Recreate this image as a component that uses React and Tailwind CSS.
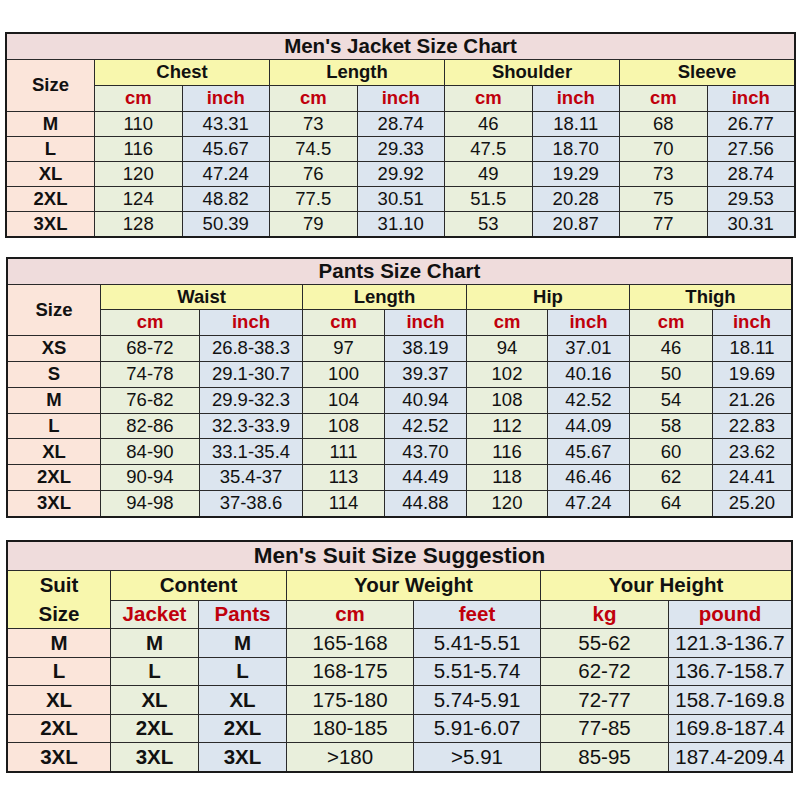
import React from 'react';

const FONT = "font-['Liberation_Sans',Arial,sans-serif]";

// cell backgrounds
const BG = {
  title: 'bg-[#efdcdc]',
  head: 'bg-[#f8f7ad]',
  size: 'bg-[#fbe5da]',
  cm: 'bg-[#e9efdc]',
  inch: 'bg-[#dce5ef]',
};

const Cell = ({ bg, className = '', children }) => (
  <div className={`${bg} flex items-center justify-center leading-none ${className}`}>{children}</div>
);

const Unit = ({ bg, children }) => (
  <Cell bg={bg} className="font-bold text-[#c0000c]">{children}</Cell>
);

const jacketRows = [
  ['M', '110', '43.31', '73', '28.74', '46', '18.11', '68', '26.77'],
  ['L', '116', '45.67', '74.5', '29.33', '47.5', '18.70', '70', '27.56'],
  ['XL', '120', '47.24', '76', '29.92', '49', '19.29', '73', '28.74'],
  ['2XL', '124', '48.82', '77.5', '30.51', '51.5', '20.28', '75', '29.53'],
  ['3XL', '128', '50.39', '79', '31.10', '53', '20.87', '77', '30.31'],
];

const pantsRows = [
  ['XS', '68-72', '26.8-38.3', '97', '38.19', '94', '37.01', '46', '18.11'],
  ['S', '74-78', '29.1-30.7', '100', '39.37', '102', '40.16', '50', '19.69'],
  ['M', '76-82', '29.9-32.3', '104', '40.94', '108', '42.52', '54', '21.26'],
  ['L', '82-86', '32.3-33.9', '108', '42.52', '112', '44.09', '58', '22.83'],
  ['XL', '84-90', '33.1-35.4', '111', '43.70', '116', '45.67', '60', '23.62'],
  ['2XL', '90-94', '35.4-37', '113', '44.49', '118', '46.46', '62', '24.41'],
  ['3XL', '94-98', '37-38.6', '114', '44.88', '120', '47.24', '64', '25.20'],
];

const suitRows = [
  ['M', 'M', 'M', '165-168', '5.41-5.51', '55-62', '121.3-136.7'],
  ['L', 'L', 'L', '168-175', '5.51-5.74', '62-72', '136.7-158.7'],
  ['XL', 'XL', 'XL', '175-180', '5.74-5.91', '72-77', '158.7-169.8'],
  ['2XL', '2XL', '2XL', '180-185', '5.91-6.07', '77-85', '169.8-187.4'],
  ['3XL', '3XL', '3XL', '>180', '>5.91', '85-95', '187.4-209.4'],
];

// data rows shared by the two measurement charts
const DataRows = ({ rows }) =>
  rows.map((r) => (
    <React.Fragment key={r[0]}>
      <Cell bg={BG.size} className="font-bold">{r[0]}</Cell>
      {r.slice(1).map((v, i) => (
        <Cell key={i} bg={i % 2 === 0 ? BG.cm : BG.inch}>{v}</Cell>
      ))}
    </React.Fragment>
  ));

const UnitRow = () =>
  [0, 1, 2, 3].map((i) => (
    <React.Fragment key={i}>
      <Unit bg={BG.cm}>cm</Unit>
      <Unit bg={BG.inch}>inch</Unit>
    </React.Fragment>
  ));

const JacketChart = () => (
  <div className="ml-[5px] mt-[32px] w-[791px] h-[206px] border-2 border-[#1a1a1a] bg-[#2a2a2a] grid grid-cols-[87px_repeat(8,minmax(0,1fr))] grid-rows-[25px_25px_25px_repeat(5,minmax(0,1fr))] gap-px text-[18.5px] text-[#111]">
    <Cell bg={BG.title} className="col-span-9 font-bold text-[20.5px]">Men's Jacket Size Chart</Cell>
    <Cell bg={BG.size} className="row-span-2 font-bold">Size</Cell>
    {['Chest', 'Length', 'Shoulder', 'Sleeve'].map((h) => (
      <Cell key={h} bg={BG.head} className="col-span-2 font-bold">{h}</Cell>
    ))}
    <UnitRow />
    <DataRows rows={jacketRows} />
  </div>
);

const PantsChart = () => (
  <div className="ml-[6px] mt-[19px] w-[787px] h-[261px] border-2 border-[#1a1a1a] bg-[#2a2a2a] grid grid-cols-[92px_98px_102px_81px_81px_80px_81px_82px_78px] grid-rows-[25px_24px_25px_repeat(7,minmax(0,1fr))] gap-px text-[18.5px] text-[#111]">
    <Cell bg={BG.title} className="col-span-9 font-bold text-[20.5px]">Pants Size Chart</Cell>
    <Cell bg={BG.size} className="row-span-2 font-bold">Size</Cell>
    {['Waist', 'Length', 'Hip', 'Thigh'].map((h) => (
      <Cell key={h} bg={BG.head} className="col-span-2 font-bold">{h}</Cell>
    ))}
    <UnitRow />
    <DataRows rows={pantsRows} />
  </div>
);

const SuitChart = () => (
  <div className="ml-[6px] mt-[22px] w-[787px] h-[233px] border-2 border-[#1a1a1a] bg-[#2a2a2a] grid grid-cols-[102px_87px_87px_126px_126px_127px_122px] grid-rows-[28px_29px_27px_repeat(5,minmax(0,1fr))] gap-px text-[20.5px] text-[#111]">
    <Cell bg={BG.title} className="col-span-7 font-bold text-[22.5px]">Men's Suit Size Suggestion</Cell>
    <div className={`${BG.head} row-span-2 grid grid-rows-2 font-bold leading-none`}>
      <span className="flex items-center justify-center">Suit</span>
      <span className="flex items-center justify-center">Size</span>
    </div>
    <Cell bg={BG.head} className="col-span-2 font-bold">Content</Cell>
    <Cell bg={BG.head} className="col-span-2 font-bold">Your Weight</Cell>
    <Cell bg={BG.head} className="col-span-2 font-bold">Your Height</Cell>
    <Unit bg={BG.cm}>Jacket</Unit>
    <Unit bg={BG.inch}>Pants</Unit>
    <Unit bg={BG.cm}>cm</Unit>
    <Unit bg={BG.inch}>feet</Unit>
    <Unit bg={BG.cm}>kg</Unit>
    <Unit bg={BG.inch}>pound</Unit>
    {suitRows.map((r) => (
      <React.Fragment key={r[0]}>
        <Cell bg={BG.size} className="font-bold">{r[0]}</Cell>
        <Cell bg={BG.cm} className="font-bold">{r[1]}</Cell>
        <Cell bg={BG.inch} className="font-bold">{r[2]}</Cell>
        {r.slice(3).map((v, i) => (
          <Cell key={i} bg={i % 2 === 0 ? BG.cm : BG.inch}>{v}</Cell>
        ))}
      </React.Fragment>
    ))}
  </div>
);

export default function App() {
  return (
    <div className={`w-[800px] h-[800px] bg-white overflow-hidden ${FONT}`}>
      <JacketChart />
      <PantsChart />
      <SuitChart />
    </div>
  );
}
